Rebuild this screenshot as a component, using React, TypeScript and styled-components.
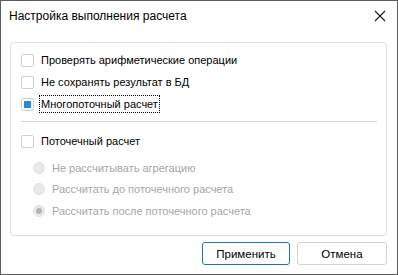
import styled, { createGlobalStyle } from 'styled-components';

const GlobalStyle = createGlobalStyle`
  html, body {
    margin: 0;
    padding: 0;
    background: #ffffff;
  }
  body {
    font-family: 'Liberation Sans', Arial, sans-serif;
    font-size: 11px;
    color: #000;
  }
`;

const Window = styled.div`
  box-sizing: border-box;
  width: 398px;
  height: 275px;
  border: 1px solid #5c5c5c;
  background: #fff;
  display: flex;
  flex-direction: column;
`;

const TitleBar = styled.div`
  height: 30px;
  display: flex;
  align-items: center;
  justify-content: space-between;
  padding: 0 10px 0 8px;
  font-size: 12px;
`;

const CloseButton = styled.button`
  border: 0;
  background: transparent;
  padding: 0;
  width: 14px;
  height: 14px;
  display: flex;
  align-items: center;
  justify-content: center;
  cursor: pointer;
`;

const Body = styled.div`
  flex: 1;
  display: flex;
  flex-direction: column;
  padding: 11px 10px 0 9px;
`;

const GroupBox = styled.div`
  height: 194px;
  box-sizing: border-box;
  border: 1px solid #dedede;
  border-radius: 4px;
  padding: 6px 9px 0 10px;
  display: flex;
  flex-direction: column;
`;

const Row = styled.label<{ $disabled?: boolean }>`
  height: 22px;
  display: flex;
  align-items: center;
  gap: 6px;
  color: ${(p) => (p.$disabled ? '#a6a6a6' : '#000')};
`;

const Box = styled.span`
  box-sizing: border-box;
  width: 13px;
  height: 13px;
  border: 1px solid #cfcfcf;
  border-radius: 2px;
  display: flex;
  align-items: center;
  justify-content: center;
  background: #fff;
  flex-shrink: 0;
`;

const BoxMark = styled.span`
  width: 7px;
  height: 7px;
  background: #2b8ad6;
`;

const Label = styled.span<{ $focused?: boolean }>`
  padding: 2px 1px;
  outline: ${(p) => (p.$focused ? '1px dotted #000' : 'none')};
  outline-offset: 0;
`;

const Separator = styled.div`
  height: 1px;
  background: #d6d6d6;
  margin: 6px 0 8px 0;
`;

const RadioList = styled.div`
  display: flex;
  flex-direction: column;
  padding: 5px 0 0 12px;
`;

const RadioRow = styled(Row)`
  height: 21.5px;
  gap: 7px;
`;

const Radio = styled.span`
  box-sizing: border-box;
  width: 12px;
  height: 12px;
  border-radius: 50%;
  background: #e9e9e9;
  border: 1px solid #e2e2e2;
  display: flex;
  align-items: center;
  justify-content: center;
  flex-shrink: 0;
`;

const RadioDot = styled.span`
  width: 6px;
  height: 6px;
  border-radius: 50%;
  background: #b4b4b4;
`;

const Footer = styled.div`
  display: flex;
  justify-content: flex-end;
  gap: 7px;
  padding: 6px 0 0 0;
`;

const Button = styled.button<{ $primary?: boolean }>`
  box-sizing: border-box;
  height: 23px;
  width: ${(p) => (p.$primary ? '88px' : '90px')};
  font-family: inherit;
  font-size: 11.5px;
  color: #000;
  background: #fff;
  border: 1px solid ${(p) => (p.$primary ? '#1b74c8' : '#d4d4d4')};
  border-radius: 3px;
  padding: 0;
`;

const CloseIcon = () => (
  <svg width="12" height="12" viewBox="0 0 12 12">
    <path d="M1 1 L11 11 M11 1 L1 11" stroke="#1a1a1a" strokeWidth="1.1" fill="none" />
  </svg>
);

interface CheckProps {
  label: string;
  checked?: boolean;
  focused?: boolean;
}

const Check = ({ label, checked, focused }: CheckProps) => (
  <Row>
    <Box>{checked && <BoxMark />}</Box>
    <Label $focused={focused}>{label}</Label>
  </Row>
);

const radios = [
  { label: 'Не рассчитывать агрегацию', selected: false },
  { label: 'Рассчитать до поточечного расчета', selected: false },
  { label: 'Рассчитать после поточечного расчета', selected: true },
];

export default function App() {
  return (
    <>
      <GlobalStyle />
      <Window>
        <TitleBar>
          <span>Настройка выполнения расчета</span>
          <CloseButton aria-label="close">
            <CloseIcon />
          </CloseButton>
        </TitleBar>
        <Body>
          <GroupBox>
            <Check label="Проверять арифметические операции" />
            <Check label="Не сохранять результат в БД" />
            <Check label="Многопоточный расчет" checked focused />
            <Separator />
            <Check label="Поточечный расчет" />
            <RadioList>
              {radios.map((r) => (
                <RadioRow key={r.label} $disabled>
                  <Radio>{r.selected && <RadioDot />}</Radio>
                  <span>{r.label}</span>
                </RadioRow>
              ))}
            </RadioList>
          </GroupBox>
          <Footer>
            <Button $primary>Применить</Button>
            <Button>Отмена</Button>
          </Footer>
        </Body>
      </Window>
    </>
  );
}
